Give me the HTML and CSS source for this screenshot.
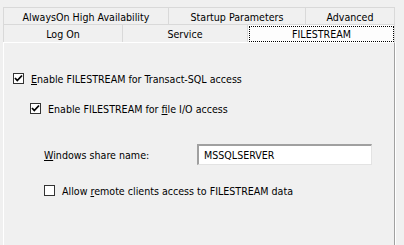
FILE: index.html
```html
<!DOCTYPE html>
<html>
<head>
<meta charset="utf-8">
<link rel="stylesheet" href="styles.css">
</head>
<body>
<div class="dialog">
  <div class="tabs">
    <div class="tabrow">
      <div class="tab t-always">AlwaysOn High Availability</div>
      <div class="tab t-startup">Startup Parameters</div>
      <div class="tab t-adv">Advanced</div>
    </div>
    <div class="tabrow">
      <div class="tab t-logon">Log On</div>
      <div class="tab t-service">Service</div>
      <div class="tab t-fs selected"><span class="focus">FILESTREAM</span></div>
    </div>
  </div>
  <div class="panel">
    <div class="opt lvl1">
      <span class="cb checked"><svg viewBox="0 0 11 11" width="11" height="11"><path d="M2 5 L4.3 7.5 L9 2.5" fill="none" stroke="#000" stroke-width="1.8"/></svg></span>
      <span class="lbl"><u>E</u>nable FILESTREAM for Transact-SQL access</span>
    </div>
    <div class="opt lvl2">
      <span class="cb checked"><svg viewBox="0 0 11 11" width="11" height="11"><path d="M2 5 L4.3 7.5 L9 2.5" fill="none" stroke="#000" stroke-width="1.8"/></svg></span>
      <span class="lbl">Enable FILESTREAM for <u>f</u>ile I/O access</span>
    </div>
    <div class="share">
      <span class="share-lbl"><u>W</u>indows share name:</span>
      <div class="input">MSSQLSERVER</div>
    </div>
    <div class="opt lvl3">
      <span class="cb"></span>
      <span class="lbl">Allow <u>r</u>emote clients access to FILESTREAM data</span>
    </div>
  </div>
</div>
</body>
</html>
```
FILE: styles.css
```css
html, body {
  margin: 0;
  padding: 0;
  background: #f0f0f0;
  width: 404px;
  height: 245px;
  overflow: hidden;
}
.dialog {
  padding: 7px 0 0 3px;
  font-family: "DejaVu Sans Condensed", "Liberation Sans", Arial, sans-serif;
  font-size: 10.6px;
  color: #000;
}
.tabs {
  width: 392px;
}
.tabrow {
  display: flex;
  height: 17px;
}
.tabrow + .tabrow {
  height: 18px;
}
.tab {
  box-sizing: border-box;
  border: 1px solid #d9d9d9;
  border-bottom: none;
  border-right: none;
  background: #f0f0f0;
  display: flex;
  align-items: center;
  justify-content: center;
  line-height: 1;
  padding-top: 2px;
}
.tab:last-child {
  border-right: 1px solid #d9d9d9;
}
.t-always { width: 165px; }
.t-startup { width: 137px; }
.t-adv { width: 90px; }
.t-logon { width: 119px; }
.t-service { width: 125px; }
.t-fs { width: 148px; }
.tab.selected {
  background: #fdfdfd;
  padding: 2px 1px 1px 2px;
}
.focus {
  flex: 1;
  align-self: stretch;
  display: flex;
  align-items: center;
  justify-content: center;
  outline: 1px dotted #000;
}
.panel {
  box-sizing: border-box;
  width: 392px;
  height: 210px;
  border-left: 1px solid #fff;
  border-top: 1px solid #fff;
  border-right: 1px solid #a0a0a0;
  box-shadow: 1px 0 0 #fff;
  padding: 29px 0 0 9px;
}
.opt {
  display: flex;
  align-items: center;
  height: 13px;
}
.cb {
  box-sizing: border-box;
  width: 11px;
  height: 11px;
  border: 1px solid #333;
  background: #fff;
  display: block;
  position: relative;
}
.cb svg {
  position: absolute;
  left: -1px;
  top: -1px;
}
.lbl {
  margin-left: 7px;
  white-space: nowrap;
}
.lvl2 {
  margin-top: 17px;
  margin-left: 17px;
}
.share {
  display: flex;
  align-items: center;
  margin-top: 29px;
  margin-left: 31px;
  height: 21px;
}
.share-lbl {
  width: 153px;
}
.input {
  box-sizing: border-box;
  width: 175px;
  height: 21px;
  background: #fff;
  border-top: 2px solid #a0a0a0;
  border-left: 2px solid #a0a0a0;
  border-right: 1px solid #e3e3e3;
  border-bottom: 1px solid #e3e3e3;
  padding: 0 0 0 5px;
  display: flex;
  align-items: center;
}
.lvl3 {
  margin-top: 19px;
  margin-left: 31px;
}
```
